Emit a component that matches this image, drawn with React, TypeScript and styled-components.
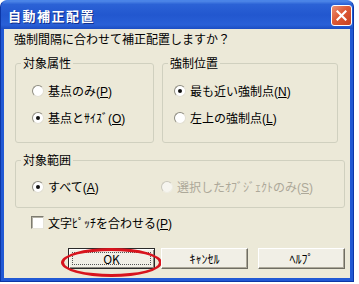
import styled, { createGlobalStyle } from 'styled-components';

const GlobalStyle = createGlobalStyle`
  html, body {
    margin: 0;
    padding: 0;
    background: #fff;
  }
  body {
    font-family: "Noto Sans CJK JP", "Noto Sans", sans-serif;
    font-size: 12px;
    color: #000;
  }
  * {
    box-sizing: border-box;
  }
`;

const Window = styled.div`
  width: 354px;
  height: 282px;
  display: flex;
  flex-direction: column;
  background: #2159d4;
  border: 1px solid #0c36a6;
  border-top-color: #4a84e8;
  border-radius: 7px 7px 0 0;
  overflow: hidden;
`;

const TitleBar = styled.div`
  height: 28px;
  flex: none;
  display: flex;
  align-items: center;
  justify-content: space-between;
  padding: 0 1px 0 7px;
  background: linear-gradient(
    #4f88e8 0%,
    #2b62d6 12%,
    #2257cf 50%,
    #2960d7 85%,
    #1c4dc2 100%
  );
`;

const Title = styled.span`
  color: #fff;
  font-size: 13px;
  font-weight: bold;
  letter-spacing: 1.5px;
  text-shadow: 1px 1px 0 #10308e;
`;

const CloseButton = styled.div`
  width: 21px;
  height: 21px;
  display: flex;
  align-items: center;
  justify-content: center;
  border: 1px solid #fff;
  border-radius: 3px;
  background: linear-gradient(135deg, #ec9276 0%, #dd5a36 45%, #c9411e 100%);
`;

const Body = styled.div`
  flex: 1;
  margin: 0 3px 3px;
  padding: 3px 0 0 11px;
  background: #ece9d8;
`;

const Prompt = styled.div`
  line-height: 14px;
  margin: 0 0 10px -1px;
`;

const GroupRow = styled.div`
  display: flex;
  gap: 8px;
`;

const Group = styled.fieldset<{ $w: number; $pt: number; $pb: number }>`
  margin: 0;
  min-width: 0;
  width: ${(p) => p.$w}px;
  padding: ${(p) => p.$pt}px 5px ${(p) => p.$pb}px;
  border: 1px solid #d0d0bf;
  border-radius: 3px;
`;

const Legend = styled.legend`
  padding: 0 2px;
  line-height: 14px;
  font-size: 12px;
`;

const OptionList = styled.div<{ $indent: number }>`
  display: flex;
  flex-direction: column;
  gap: 11px;
  padding-left: ${(p) => p.$indent}px;
`;

const OptionGrid = styled.div`
  display: grid;
  grid-template-columns: 129px auto;
  padding-left: 11px;
`;

const Option = styled.label<{ $disabled?: boolean }>`
  display: flex;
  align-items: center;
  gap: 4px;
  height: 16px;
  line-height: 16px;
  white-space: nowrap;
  color: ${(p) => (p.$disabled ? '#aca899' : '#000')};
`;

const Radio = styled.span<{ $checked?: boolean; $disabled?: boolean }>`
  position: relative;
  flex: none;
  width: 12px;
  height: 12px;
  border-radius: 50%;
  background: ${(p) => (p.$disabled ? '#f6f5ef' : '#fff')};
  border: 1px solid;
  border-color: ${(p) =>
    p.$disabled ? '#c9c7bb #eeece2 #eeece2 #c9c7bb' : '#8e8c80 #e2dfd2 #e2dfd2 #8e8c80'};
  &::after {
    content: '';
    display: ${(p) => (p.$checked ? 'block' : 'none')};
    position: absolute;
    left: 3px;
    top: 3px;
    width: 4px;
    height: 4px;
    border-radius: 50%;
    background: #111;
  }
`;

// "(P)" style access key; latin metrics keep the parentheses tight
const Access = styled.span`
  font-family: "Liberation Sans", Arial, sans-serif;
  font-size: 12px;
  u {
    text-decoration: underline;
  }
`;

function Mnemonic({ k }: { k: string }) {
  return (
    <Access>
      (<u>{k}</u>)
    </Access>
  );
}

const StackedGroup = styled(Group)`
  margin-top: 10px;
`;

const CheckRow = styled.label`
  display: flex;
  align-items: center;
  gap: 4px;
  height: 16px;
  margin-top: 6px;
  padding-left: 16px;
  white-space: nowrap;
`;

const Checkbox = styled.span`
  flex: none;
  width: 13px;
  height: 13px;
  background: #fff;
  border: 1px solid;
  border-color: #7d7b70 #e5e3d8 #e5e3d8 #7d7b70;
  box-shadow: inset 1px 1px 0 #b4b2a6;
`;

const ButtonRow = styled.div`
  display: flex;
  margin-top: 18px;
  padding-left: 53px;
`;

const ButtonSlot = styled.div<{ $ml?: number }>`
  position: relative;
  margin-left: ${(p) => p.$ml ?? 0}px;
`;

const Button = styled.button<{ $default?: boolean }>`
  position: relative;
  display: block;
  width: 87px;
  height: 21px;
  padding: 0;
  font: inherit;
  font-size: 12px;
  color: #000;
  background: #f1efe6;
  border: 1px solid;
  border-color: ${(p) => (p.$default ? '#2a2a2a' : '#fff #6f6d63 #6f6d63 #fff')};
  box-shadow: ${(p) =>
    p.$default
      ? 'inset 1px 1px 0 #fff, inset -1px -1px 0 #8c8a80'
      : 'inset -1px -1px 0 #aca899'};
  &::before {
    content: '';
    display: ${(p) => (p.$default ? 'block' : 'none')};
    position: absolute;
    inset: 3px;
    border: 1px dotted #555;
  }
`;

const Highlight = styled.span`
  position: absolute;
  left: -7px;
  top: 0;
  width: 101px;
  height: 29px;
  border: 3px solid #d8141e;
  border-radius: 50%;
  pointer-events: none;
`;

export default function App() {
  return (
    <>
      <GlobalStyle />
      <Window>
        <TitleBar>
          <Title>自動補正配置</Title>
          <CloseButton>
            <svg width="11" height="11" viewBox="0 0 11 11">
              <path d="M1.5 1.5 L9.5 9.5 M9.5 1.5 L1.5 9.5" stroke="#fff" strokeWidth="2.2" strokeLinecap="square" />
            </svg>
          </CloseButton>
        </TitleBar>
        <Body>
          <Prompt>強制間隔に合わせて補正配置しますか？</Prompt>
          <GroupRow>
            <Group $w={139} $pt={13} $pb={16}>
              <Legend>対象属性</Legend>
              <OptionList $indent={11}>
                <Option>
                  <Radio />
                  <span>基点のみ<Mnemonic k="P" /></span>
                </Option>
                <Option>
                  <Radio $checked />
                  <span>基点とｻｲｽﾞ<Mnemonic k="O" /></span>
                </Option>
              </OptionList>
            </Group>
            <Group $w={176} $pt={13} $pb={16}>
              <Legend>強制位置</Legend>
              <OptionList $indent={6}>
                <Option>
                  <Radio $checked />
                  <span>最も近い強制点<Mnemonic k="N" /></span>
                </Option>
                <Option>
                  <Radio />
                  <span>左上の強制点<Mnemonic k="L" /></span>
                </Option>
              </OptionList>
            </Group>
          </GroupRow>
          <StackedGroup $w={330} $pt={12} $pb={12}>
            <Legend>対象範囲</Legend>
            <OptionGrid>
              <Option>
                <Radio $checked />
                <span>すべて<Mnemonic k="A" /></span>
              </Option>
              <Option $disabled>
                <Radio $disabled />
                <span>選択したｵﾌﾞｼﾞｪｸﾄのみ<Mnemonic k="S" /></span>
              </Option>
            </OptionGrid>
          </StackedGroup>
          <CheckRow>
            <Checkbox />
            <span>文字ﾋﾟｯﾁを合わせる<Mnemonic k="P" /></span>
          </CheckRow>
          <ButtonRow>
            <ButtonSlot>
              <Button $default>OK</Button>
              <Highlight />
            </ButtonSlot>
            <ButtonSlot $ml={6}>
              <Button>ｷｬﾝｾﾙ</Button>
            </ButtonSlot>
            <ButtonSlot $ml={10}>
              <Button>ﾍﾙﾌﾟ</Button>
            </ButtonSlot>
          </ButtonRow>
        </Body>
      </Window>
    </>
  );
}
